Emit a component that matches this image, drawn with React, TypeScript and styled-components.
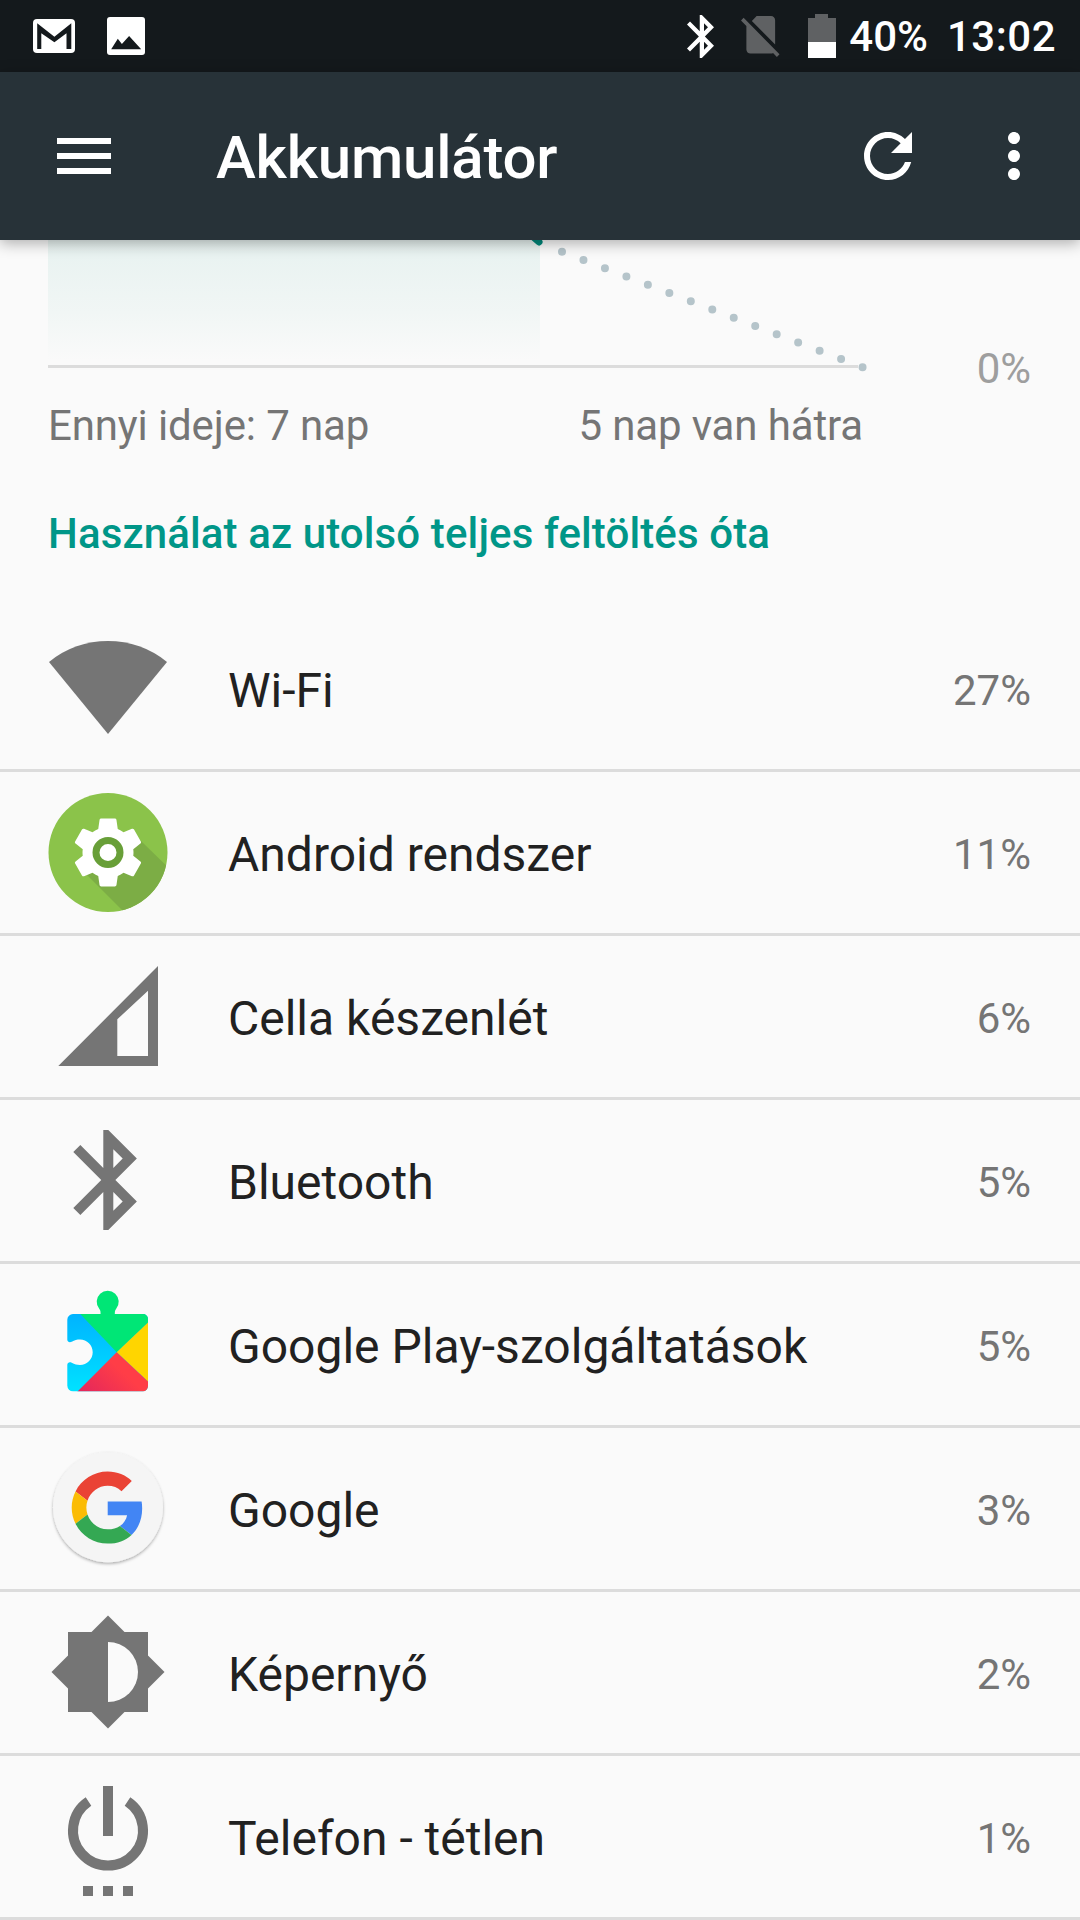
import React from "react";
import styled, { createGlobalStyle } from "styled-components";

const Global = createGlobalStyle`
  html, body { margin: 0; padding: 0; background: #fafafa; }
  body { font-family: Roboto, "Noto Sans", sans-serif; }
  * { box-sizing: border-box; }
`;

const Page = styled.div`
  width: 1080px;
  height: 1920px;
  overflow: hidden;
  background: #fafafa;
`;

const StatusBar = styled.div`
  height: 72px;
  background: #14191c;
  display: flex;
  align-items: center;
  padding: 0 24px 0 33px;
  color: #fff;
`;

const GmailGlyph = styled.svg`
  width: 42px;
  height: 34px;
  margin-right: 32px;
`;

const PictureGlyph = styled.svg`
  width: 38px;
  height: 38px;
`;

const StatusRight = styled.div`
  margin-left: auto;
  display: flex;
  align-items: center;
`;

const BluetoothGlyph = styled.svg`
  width: 27px;
  height: 43px;
  margin-right: 27px;
`;

const SimGlyph = styled.svg`
  width: 40px;
  height: 41px;
  margin-right: 27px;
`;

const BatteryGlyph = styled.svg`
  width: 28px;
  height: 44px;
  margin-right: 13px;
`;

const StatusText = styled.span<{ $gap?: number; $track?: number }>`
  font-size: 42px;
  line-height: 72px;
  font-weight: 500;
  padding-top: 2px;
  letter-spacing: ${(p) => p.$track ?? 0}px;
  margin-right: ${(p) => p.$gap ?? 0}px;
`;

const Toolbar = styled.header`
  position: relative;
  z-index: 2;
  height: 168px;
  background: #273238;
  box-shadow: 0 3px 14px rgba(0, 0, 0, 0.32);
  display: flex;
  align-items: center;
  padding: 0 30px 0 48px;
  color: #fff;
`;

const ToolIcon = styled.svg<{ $gap?: number }>`
  width: 72px;
  height: 72px;
  fill: #fff;
  flex-shrink: 0;
  margin-left: ${(p) => p.$gap ?? 0}px;
`;

const Title = styled.h1`
  margin: 0 0 0 96px;
  padding-top: 4px;
  font-size: 60px;
  line-height: 72px;
  font-weight: 500;
  letter-spacing: -0.2px;
  flex: 1;
`;

const ChartRow = styled.section`
  height: 153px;
  display: flex;
  justify-content: space-between;
  align-items: flex-end;
  padding: 0 49px 0 48px;
`;

const ChartSvg = styled.svg`
  width: 830px;
  height: 132px;
  align-self: flex-start;
`;

const AxisLabel = styled.span`
  font-size: 42px;
  line-height: 49px;
  color: #9e9e9e;
`;

const TimeRow = styled.div`
  width: 815px;
  margin: 8px 0 0 48px;
  display: flex;
  justify-content: space-between;
  font-size: 42px;
  line-height: 49px;
  letter-spacing: -0.13px;
  color: #757575;
`;

const SectionTitle = styled.h2`
  margin: 59px 0 50px 48px;
  font-size: 42px;
  line-height: 49px;
  font-weight: 500;
  letter-spacing: 0.12px;
  color: #009688;
`;

const List = styled.ul`
  list-style: none;
  margin: 0;
  padding: 0;
`;

const Row = styled.li`
  height: 164px;
  display: flex;
  align-items: center;
  padding: 0 49px 0 48px;
  border-bottom: 3px solid #dcdcdc;
`;

const RowIcon = styled.svg`
  width: 120px;
  height: 121px;
  flex-shrink: 0;
  fill: #757575;
`;

const RowLabel = styled.span`
  flex: 1;
  margin-left: 60px;
  padding-top: 5px;
  font-size: 48px;
  line-height: 56px;
  color: #212121;
`;

const RowValue = styled.span`
  padding-top: 5px;
  font-size: 42px;
  line-height: 56px;
  color: #757575;
`;

const BT =
  "M17.71 7.71L12 2h-1v7.59L6.41 5 5 6.41 10.59 12 5 17.59 6.41 19 11 14.41V22h1l5.71-5.71-4.3-4.29 4.3-4.29zM13 5.83l1.88 1.88L13 9.59V5.83zm1.88 10.46L13 18.17v-3.76l1.88 1.88z";

const GEAR =
  "M19.43 12.98c.04-.32.07-.64.07-.98s-.03-.66-.07-.98l2.11-1.65c.19-.15.24-.42.12-.64l-2-3.46c-.12-.22-.39-.3-.61-.22l-2.49 1c-.52-.4-1.08-.73-1.69-.98l-.38-2.65C14.46 2.18 14.25 2 14 2h-4c-.25 0-.46.18-.49.42l-.38 2.65c-.61.25-1.17.59-1.69.98l-2.49-1c-.23-.09-.49 0-.61.22l-2 3.46c-.13.22-.07.49.12.64l2.11 1.65c-.04.32-.07.65-.07.98s.03.66.07.98l-2.11 1.65c-.19.15-.24.42-.12.64l2 3.46c.12.22.39.3.61.22l2.49-1c.52.4 1.08.73 1.69.98l.38 2.65c.03.24.24.42.49.42h4c.25 0 .46-.18.49-.42l.38-2.65c.61-.25 1.17-.59 1.69-.98l2.49 1c.23.09.49 0 .61-.22l2-3.46c.12-.22.07-.49-.12-.64l-2.11-1.65z";

const WifiIcon = () => (
  <RowIcon viewBox="0 0 120 121">
    <path d="M60 106L1 34A93 93 0 0 1 119 34Z" />
  </RowIcon>
);

const AndroidIcon = () => (
  <RowIcon viewBox="0 0 120 121">
    <defs>
      <clipPath id="androidDisc">
        <circle cx="60" cy="60.5" r="59.5" />
      </clipPath>
    </defs>
    <circle cx="60" cy="60.5" r="59.5" fill="#8bc34a" />
    <polygon points="37,81 80,124 130,124 130,85 92,48" fill="#7cad45" clipPath="url(#androidDisc)" />
    <path d={GEAR} fill="#fff" transform="translate(60 60.5) scale(3.4) translate(-12 -12)" />
    <circle cx="60" cy="60.5" r="12" fill="#fff" stroke="#689f38" strokeWidth="7" />
  </RowIcon>
);

const CellIcon = () => (
  <RowIcon viewBox="0 0 120 121">
    <path fillRule="evenodd" d="M10.3 110L110 10V110ZM69.3 100H100V34.7L69.3 63.3Z" />
  </RowIcon>
);

const BluetoothIcon = () => (
  <RowIcon viewBox="0 0 120 121">
    <path d={BT} transform="translate(0.3 0) scale(5)" />
  </RowIcon>
);

const PlayIcon = () => (
  <RowIcon viewBox="0 0 120 121">
    <defs>
      <clipPath id="playBody">
        <path d="M25 30H95a5 5 0 0 1 5 5V102a5.3 5.3 0 0 1-5 5.3H25a5.7 5.7 0 0 1-5.7-5.7V81c0-2.5 2.5-3.2 4.4-2.2 3 1.6 5.2 2.2 8.3 2.2 7 0 12.7-5.7 12.7-12.7S39 55.6 32 55.6c-3 0-5.3.6-8.3 2.2-1.9 1-4.4.3-4.4-2.2V35.7A5.7 5.7 0 0 1 25 30Z" />
      </clipPath>
      <linearGradient id="playBlue" x1="0" y1="0" x2="0" y2="1">
        <stop offset="0" stopColor="#00b0ff" />
        <stop offset="1" stopColor="#00e5ff" />
      </linearGradient>
      <linearGradient id="playRed" x1="0" y1="1" x2="1" y2="0.4">
        <stop offset="0" stopColor="#e0245e" />
        <stop offset="0.7" stopColor="#ff3d47" />
      </linearGradient>
    </defs>
    <path d="M52.6 31c0-3 0-4.5-1.4-6.2a11 11 0 1 1 17 0C66.8 26.5 66.8 28 66.8 31Z" fill="#00e676" />
    <g clipPath="url(#playBody)">
      <rect x="15" y="25" width="90" height="87" fill="url(#playBlue)" />
      <polygon points="30.3,28 102,28 102,36.5 68.7,68.3" fill="#00e676" />
      <polygon points="102,36.5 68.7,68.3 102,99.3" fill="#ffd500" />
      <polygon points="68.7,68.3 102,99.3 102,110 27,110" fill="url(#playRed)" />
    </g>
  </RowIcon>
);

const GoogleIcon = () => (
  <RowIcon viewBox="0 0 120 121">
    <defs>
      <filter id="discShade" x="-10%" y="-10%" width="120%" height="125%">
        <feDropShadow dx="0" dy="1.5" stdDeviation="1.5" floodColor="#000" floodOpacity="0.32" />
      </filter>
    </defs>
    <circle cx="60" cy="59.3" r="55" fill="#f5f5f5" filter="url(#discShade)" />
    <g transform="translate(23.7 23.6) scale(1.5)">
      <path fill="#EA4335" d="M24 9.5c3.54 0 6.71 1.22 9.21 3.6l6.85-6.85C35.9 2.38 30.47 0 24 0 14.62 0 6.51 5.38 2.56 13.22l7.98 6.19C12.43 13.72 17.74 9.5 24 9.5z" />
      <path fill="#4285F4" d="M46.98 24.55c0-1.57-.15-3.09-.38-4.55H24v9.02h12.94c-.58 2.96-2.26 5.48-4.78 7.18l7.73 6c4.51-4.18 7.09-10.36 7.09-17.65z" />
      <path fill="#FBBC05" d="M10.53 28.59c-.48-1.45-.76-2.99-.76-4.59s.27-3.14.76-4.59l-7.98-6.19C.92 16.46 0 20.12 0 24c0 3.88.92 7.54 2.56 10.78l7.97-6.19z" />
      <path fill="#34A853" d="M24 48c6.48 0 11.93-2.13 15.89-5.81l-7.73-6c-2.15 1.45-4.92 2.3-8.16 2.3-6.26 0-11.57-4.22-13.47-9.91l-7.98 6.19C6.51 42.62 14.62 48 24 48z" />
    </g>
  </RowIcon>
);

const ScreenIcon = () => (
  <RowIcon viewBox="0 0 120 121">
    <path d="M20 20H100V100H20ZM60 3.5L116.5 60 60 116.5 3.5 60Z" />
    <path d="M60 30A30 30 0 0 1 60 90Z" fill="#fafafa" />
  </RowIcon>
);

const PowerIcon = () => (
  <RowIcon viewBox="0 0 120 121">
    <path d="M40.5 25.5A35 35 0 1 0 79.5 25.5" fill="none" stroke="#757575" strokeWidth="10" />
    <rect x="55" y="10" width="10" height="50" />
    <rect x="35" y="110" width="10" height="10" />
    <rect x="55" y="110" width="10" height="10" />
    <rect x="75" y="110" width="10" height="10" />
  </RowIcon>
);

const rows: { name: string; value: string; Icon: React.FC }[] = [
  { name: "Wi-Fi", value: "27%", Icon: WifiIcon },
  { name: "Android rendszer", value: "11%", Icon: AndroidIcon },
  { name: "Cella készenlét", value: "6%", Icon: CellIcon },
  { name: "Bluetooth", value: "5%", Icon: BluetoothIcon },
  { name: "Google Play-szolgáltatások", value: "5%", Icon: PlayIcon },
  { name: "Google", value: "3%", Icon: GoogleIcon },
  { name: "Képernyő", value: "2%", Icon: ScreenIcon },
  { name: "Telefon - tétlen", value: "1%", Icon: PowerIcon },
];

export default function App() {
  return (
    <Page>
      <Global />
      <StatusBar>
        <GmailGlyph viewBox="33 19 42 34">
          <rect x="33" y="19" width="42" height="34" rx="4" fill="#fff" />
          <polygon
            points="37.2,23.3 54.4,36.7 71.3,23.3 71.3,49 66.5,49 66.5,33.3 54.4,42.3 41.3,33.3 41.3,49 37.2,49"
            fill="#14191c"
          />
        </GmailGlyph>
        <PictureGlyph viewBox="107 17 38 38">
          <rect x="107" y="17" width="38" height="38" rx="3" fill="#fff" />
          <polygon points="111.2,49.3 117.8,38.7 121.9,44 129.1,36 141.2,49.3" fill="#14191c" />
        </PictureGlyph>
        <StatusRight>
          <BluetoothGlyph viewBox="5 2 12.71 20" preserveAspectRatio="none">
            <path d={BT} fill="#fff" />
          </BluetoothGlyph>
          <SimGlyph viewBox="2.38 3 19.47 19.62" preserveAspectRatio="none">
            <path
              fill="#5f6163"
              d="M18.99 5c0-1.1-.89-2-1.99-2h-7L7.66 5.34 19 16.68 18.99 5zM3.65 3.88L2.38 5.15 5 7.77V19c0 1.1.9 2 2 2h10.01c.35 0 .67-.1.96-.26l1.88 1.88 1.27-1.27L3.65 3.88z"
            />
          </SimGlyph>
          <BatteryGlyph viewBox="0 0 28 44">
            <path d="M7 0H20V4H28V28H0V4H7Z" fill="#5f6163" />
            <rect x="0" y="28" width="28" height="16" fill="#fff" />
          </BatteryGlyph>
          <StatusText $gap={19}>40%</StatusText>
          <StatusText $track={0.5}>13:02</StatusText>
        </StatusRight>
      </StatusBar>

      <Toolbar>
        <ToolIcon viewBox="0 0 24 24">
          <path d="M3 6h18v2H3zM3 11h18v2H3zM3 16h18v2H3z" />
        </ToolIcon>
        <Title>Akkumulátor</Title>
        <ToolIcon viewBox="0 0 24 24">
          <path d="M17.65 6.35C16.2 4.9 14.21 4 12 4c-4.42 0-7.99 3.58-7.99 8s3.57 8 7.99 8c3.73 0 6.84-2.55 7.73-6h-2.08c-.82 2.33-3.04 4-5.65 4-3.31 0-6-2.69-6-6s2.69-6 6-6c1.66 0 3.14.69 4.22 1.78L13 11h7V4l-2.35 2.35z" />
        </ToolIcon>
        <ToolIcon viewBox="0 0 24 24" $gap={54}>
          <path d="M12 8c1.1 0 2-.9 2-2s-.9-2-2-2-2 .9-2 2 .9 2 2 2zm0 2c-1.1 0-2 .9-2 2s.9 2 2 2 2-.9 2-2-.9-2-2-2zm0 6c-1.1 0-2 .9-2 2s.9 2 2 2 2-.9 2-2-.9-2-2-2z" />
        </ToolIcon>
      </Toolbar>

      <ChartRow>
        <ChartSvg viewBox="0 0 830 132">
          <defs>
            <linearGradient id="chartFill" x1="0" y1="0" x2="0" y2="1">
              <stop offset="0" stopColor="#e7f2f0" />
              <stop offset="0.6" stopColor="#f1f6f5" />
              <stop offset="1" stopColor="#fafafa" />
            </linearGradient>
          </defs>
          <rect x="0" y="0" width="492" height="121" fill="url(#chartFill)" />
          <rect x="0" y="125" width="810" height="3" fill="#dcdcdc" />
          <path d="M482 -6L491 2" stroke="#00897b" strokeWidth="7" strokeLinecap="round" fill="none" />
          <line
            x1="514"
            y1="11.7"
            x2="814.7"
            y2="127.3"
            stroke="#b5c4ca"
            strokeWidth="8"
            strokeLinecap="round"
            strokeDasharray="0 23"
          />
        </ChartSvg>
        <AxisLabel>0%</AxisLabel>
      </ChartRow>
      <TimeRow>
        <span>Ennyi ideje: 7 nap</span>
        <span>5 nap van hátra</span>
      </TimeRow>
      <SectionTitle>Használat az utolsó teljes feltöltés óta</SectionTitle>

      <List>
        {rows.map(({ name, value, Icon }) => (
          <Row key={name}>
            <Icon />
            <RowLabel>{name}</RowLabel>
            <RowValue>{value}</RowValue>
          </Row>
        ))}
      </List>
    </Page>
  );
}
